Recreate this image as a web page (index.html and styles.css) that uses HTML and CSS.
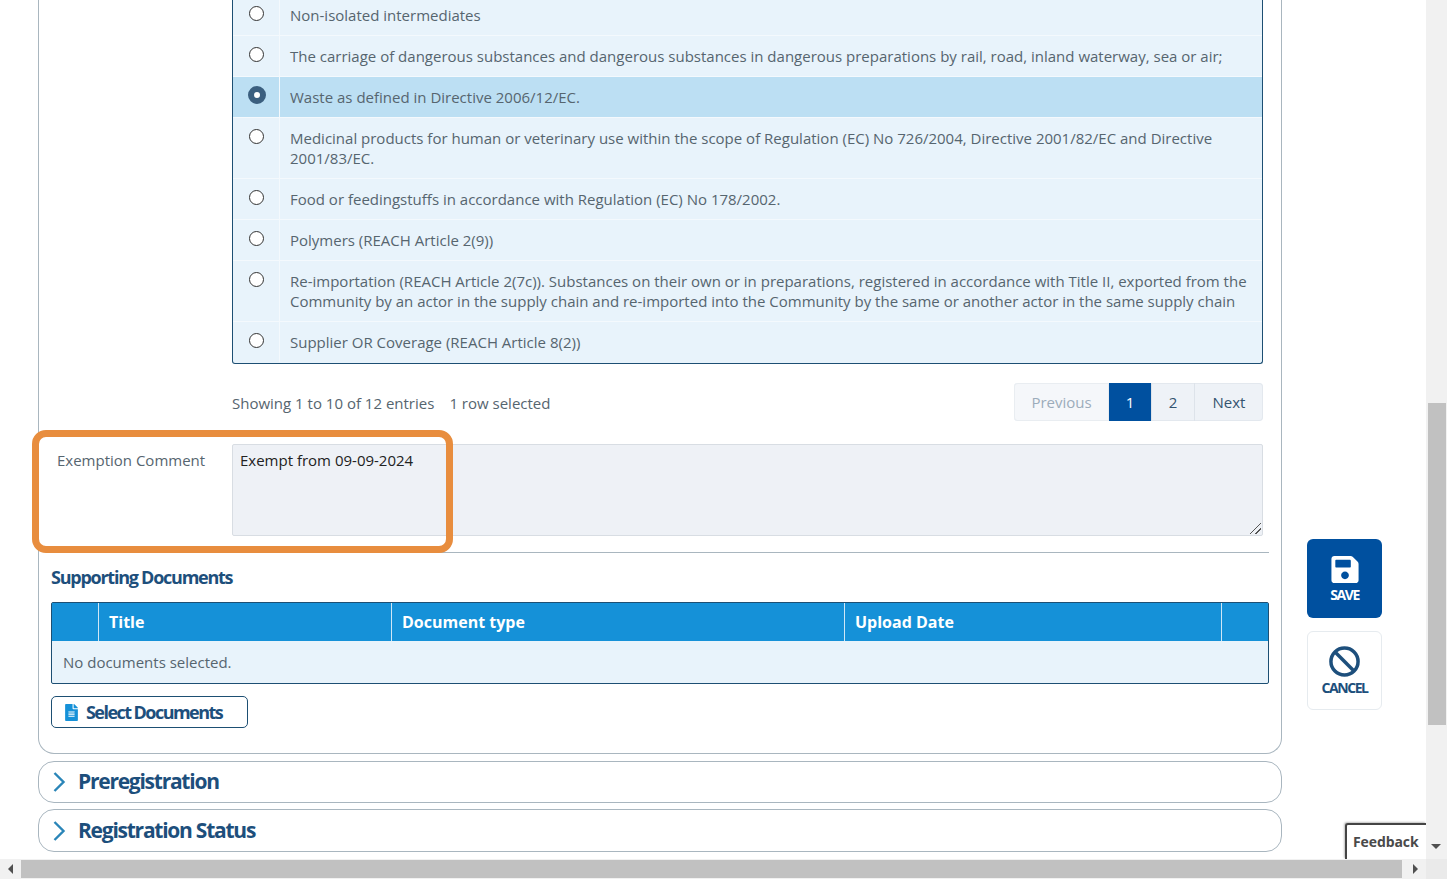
FILE: index.html
```html
<!DOCTYPE html>
<html lang="en">
<head>
<meta charset="utf-8">
<title>Exemption</title>
<link rel="stylesheet" href="styles.css">
</head>
<body>
<div class="window">
  <div class="page">
    <main class="scroller">
      <div class="scroll-content">
        <section class="panel panel-open">
          <div class="field">
            <div></div>
            <div>
              <div class="options">
                <label class="option"><span class="option-radio"><input type="radio" name="ex"></span><span class="option-text">Non-isolated intermediates</span></label>
                <label class="option"><span class="option-radio"><input type="radio" name="ex"></span><span class="option-text">The carriage of dangerous substances and dangerous substances in dangerous preparations by rail, road, inland waterway, sea or air;</span></label>
                <label class="option option-selected"><span class="option-radio"><input type="radio" name="ex" checked></span><span class="option-text">Waste as defined in Directive 2006/12/EC.</span></label>
                <label class="option"><span class="option-radio"><input type="radio" name="ex"></span><span class="option-text">Medicinal products for human or veterinary use within the scope of Regulation (EC) No 726/2004, Directive 2001/82/EC and Directive 2001/83/EC.</span></label>
                <label class="option"><span class="option-radio"><input type="radio" name="ex"></span><span class="option-text">Food or feedingstuffs in accordance with Regulation (EC) No 178/2002.</span></label>
                <label class="option"><span class="option-radio"><input type="radio" name="ex"></span><span class="option-text">Polymers (REACH Article 2(9))</span></label>
                <label class="option"><span class="option-radio"><input type="radio" name="ex"></span><span class="option-text">Re-importation (REACH Article 2(7c)). Substances on their own or in preparations, registered in accordance with Title II, exported from the Community by an actor in the supply chain and re-imported into the Community by the same or another actor in the same supply chain</span></label>
                <label class="option"><span class="option-radio"><input type="radio" name="ex"></span><span class="option-text">Supplier OR Coverage (REACH Article 8(2))</span></label>
              </div>
              <div class="table-footer">
                <div class="table-info"><span>Showing 1 to 10 of 12 entries</span><span>1 row selected</span></div>
                <nav class="pager">
                  <a class="pager-item pager-disabled">Previous</a>
                  <a class="pager-item pager-current">1</a>
                  <a class="pager-item">2</a>
                  <a class="pager-item">Next</a>
                </nav>
              </div>
            </div>
          </div>
          <div class="field field-comment">
            <label class="field-label" for="comment">Exemption Comment</label>
            <textarea id="comment" class="comment" readonly>Exempt from 09-09-2024</textarea>
          </div>
          <hr class="divider">
          <h3 class="docs-title">Supporting Documents</h3>
          <div class="docs-table">
            <div class="docs-head">
              <div class="docs-cell"></div>
              <div class="docs-cell">Title</div>
              <div class="docs-cell">Document type</div>
              <div class="docs-cell">Upload Date</div>
              <div class="docs-cell"></div>
            </div>
            <div class="docs-empty">No documents selected.</div>
          </div>
          <button class="select-btn" type="button">
            <svg class="select-icon" viewBox="0 0 384 512"><path d="M224 136V0H24C10.7 0 0 10.7 0 24v464c0 13.3 10.7 24 24 24h336c13.3 0 24-10.7 24-24V160H248c-13.2 0-24-10.8-24-24zm64 236c0 6.6-5.4 12-12 12H108c-6.6 0-12-5.4-12-12v-8c0-6.6 5.4-12 12-12h168c6.6 0 12 5.4 12 12v8zm0-64c0 6.6-5.4 12-12 12H108c-6.6 0-12-5.4-12-12v-8c0-6.6 5.4-12 12-12h168c6.6 0 12 5.4 12 12v8zm0-72v8c0 6.6-5.4 12-12 12H108c-6.6 0-12-5.4-12-12v-8c0-6.6 5.4-12 12-12h168c6.6 0 12 5.4 12 12zm96-114.1v6.1H256V0h6.1c6.4 0 12.5 2.5 17 7l97.9 98c4.5 4.5 7 10.6 7 16.9z"/></svg>
            <span>Select Documents</span>
          </button>
        </section>
        <section class="panel panel-closed">
          <svg class="chevron" viewBox="0 0 14 22"><path d="M2.5 2 L11.5 11 L2.5 20"/></svg>
          <h2 class="panel-title">Preregistration</h2>
        </section>
        <section class="panel panel-closed">
          <svg class="chevron" viewBox="0 0 14 22"><path d="M2.5 2 L11.5 11 L2.5 20"/></svg>
          <h2 class="panel-title">Registration Status</h2>
        </section>
      </div>
      <div class="annotation"></div>
      <div class="actions">
        <button class="action action-save" type="button">
          <svg class="action-icon" viewBox="0 0 448 512"><path d="M433.941 129.941l-83.882-83.882A48 48 0 0 0 316.118 32H48C21.49 32 0 53.49 0 80v352c0 26.51 21.49 48 48 48h352c26.51 0 48-21.49 48-48V163.882a48 48 0 0 0-14.059-33.941zM224 416c-35.346 0-64-28.654-64-64 0-35.346 28.654-64 64-64s64 28.654 64 64c0 35.346-28.654 64-64 64zm96-304.52V212c0 6.627-5.373 12-12 12H76c-6.627 0-12-5.373-12-12V108c0-6.627 5.373-12 12-12h228.52c3.183 0 6.235 1.264 8.485 3.515l3.48 3.48A11.996 11.996 0 0 1 320 111.48z"/></svg>
          <span>SAVE</span>
        </button>
        <button class="action action-cancel" type="button">
          <svg class="action-icon" viewBox="0 0 32 32"><circle cx="16" cy="16" r="14"/><path d="M6.5 6.5 L25.5 25.5"/></svg>
          <span>CANCEL</span>
        </button>
      </div>
      <div class="feedback">Feedback</div>
    </main>
    <div class="hscroll">
      <span class="arrow arrow-left"></span>
      <div class="hscroll-thumb"></div>
      <span class="arrow arrow-right"></span>
    </div>
  </div>
  <div class="vscroll">
    <div class="vscroll-thumb"></div>
    <div class="vscroll-corner"></div>
    <span class="arrow arrow-down"></span>
  </div>
</div>
</body>
</html>
```
FILE: styles.css
```css
* { box-sizing: border-box; }
html, body { margin: 0; height: 100%; overflow: hidden; }
body { font-family: "Open Sans", "Liberation Sans", sans-serif; font-size: 15px; line-height: 20px; color: #56656f; background: #fff; }

.window { display: flex; width: 1447px; height: 879px; }
.page { flex: 1; min-width: 0; display: flex; flex-direction: column; }
.scroller { position: relative; flex: 1; min-height: 0; overflow: hidden; }
.scroll-content { margin-top: -5px; padding-left: 38px; width: 1282px; display: flex; flex-direction: column; gap: 6px; }

.panel { border: 1px solid #a9b6bf; background: #fff; }
.panel-open { border-top: 0; border-radius: 0 0 16px 16px; padding: 0 12px 25px; margin-bottom: 1px; }
.panel-closed { display: flex; align-items: center; height: 42px; border-radius: 16px; padding-left: 13px; }
.panel-closed:last-child { height: 43px; }

.field { display: grid; grid-template-columns: 175px 1031px; padding: 0 6px; }
.options { border: 1px solid #1d4f73; border-top: 0; border-radius: 0 0 3px 3px; background: #e8f3fb; }
.option { display: flex; border-top: 1px solid #f4f9fd; }
.option:first-child { border-top: 0; }
.option:last-child { padding-bottom: 1px; }
.option-selected { background: #bcdff3; }
.option-radio { flex: 0 0 47px; border-right: 1px solid #f4f9fd; display: flex; justify-content: center; align-items: flex-start; padding-top: 11px; }
.option-radio input { appearance: none; margin: 0; width: 15px; height: 15px; border: 1.5px solid #333; border-radius: 50%; background: #fff; }
.option-radio input:checked { width: 18px; height: 18px; margin-top: -2px; margin-left: 2px; border: 6px solid #3b5f7f; }
.option-text { flex: 1; padding: 10px 11px 10px 10px; }

.table-footer { display: flex; justify-content: space-between; align-items: center; margin-top: 19px; height: 38px; }
.table-info { display: flex; gap: 15px; padding-top: 2px; }
.pager { display: flex; height: 38px; border-radius: 4px; background: #eef2f7; box-shadow: inset 0 0 0 1px #e3e8ee; }
.pager-item { display: flex; align-items: center; justify-content: center; width: 43px; border-left: 1px solid #dde3ea; color: #33546f; }
.pager-item:first-child { width: 95px; border-left: 0; }
.pager-item:last-child { width: 69px; }
.pager-disabled { color: #9cacbb; background: #f5f7fa; border-radius: 4px 0 0 4px; box-shadow: inset 0 0 0 1px #e9edf1; }
.pager-current { width: 42px; border-left: 0; color: #fff; background: #00509f; }

.field-comment { margin-top: 23px; }
.field-label { padding-top: 6px; padding-right: 10px; }
.comment { display: block; width: 1031px; height: 92px; margin: 0; padding: 5px 7px; border: 1px solid #d8dde3; border-radius: 2px; background: #eef1f6; color: #222; font: inherit; outline: 0; resize: both; }
.comment::-webkit-resizer { background: linear-gradient(135deg, transparent 46%, #555 46% 53%, transparent 53% 72%, #555 72% 79%, transparent 79%) no-repeat right 1px bottom 1px / 11px 11px; }

.divider { margin: 16px 0 0; border: 0; border-top: 1px solid #a9b6bf; }
.docs-title { margin: 12px 0 0; font-size: 18px; line-height: 24px; font-weight: 700; letter-spacing: -1.25px; color: #1d4f7c; }

.docs-table { margin-top: 13px; border: 1px solid #1d4f73; border-radius: 2px; background: #e8f3fb; }
.docs-head { display: grid; grid-template-columns: 46px 293px 453px 377px 1fr; height: 38px; background: #1591d8; color: #fff; font-size: 16px; font-weight: 700; line-height: 38px; }
.docs-cell { border-left: 1px solid #cfe7f6; padding-left: 10px; }
.docs-cell:first-child { border-left: 0; }
.docs-empty { height: 42px; padding: 11px; }

.select-btn { display: flex; align-items: center; gap: 8px; width: 197px; height: 32px; margin-top: 12px; padding: 0 0 0 13px; border: 1px solid #1d4f73; border-radius: 5px; background: #fff; font: 700 18px "Open Sans", sans-serif; letter-spacing: -1.55px; color: #1d4f7c; }
.select-icon { width: 13px; height: 17px; fill: #1591d8; }

.chevron { width: 14px; height: 22px; fill: none; stroke: #2a85b8; stroke-width: 2.4; }
.panel-title { margin: 0 0 0 12px; padding-bottom: 2px; font-size: 21px; line-height: 30px; font-weight: 700; letter-spacing: -1.25px; color: #1d4f7c; }

.annotation { position: absolute; left: 32px; top: 430px; width: 421px; height: 123px; border: 7px solid #e88d3e; border-radius: 14px; }

.actions { position: absolute; left: 1307px; top: 539px; display: flex; flex-direction: column; gap: 13px; width: 75px; }
.action { display: flex; flex-direction: column; align-items: center; height: 79px; padding: 15px 0 0; border-radius: 6px; font: 700 14px/18px "Open Sans", sans-serif; letter-spacing: -1.4px; }
.action-icon { width: 28px; height: 31px; }
.action-save { border: 0; background: #00509f; color: #fff; }
.action-save .action-icon { fill: #fff; }
.action-save span { margin-top: 1px; }
.action-cancel { border: 1px solid #e6ebef; background: #fff; color: #1d4f7c; padding-top: 14px; }
.action-cancel .action-icon { width: 31px; height: 31px; fill: none; stroke: #1d4f7c; stroke-width: 3.6; }
.action-cancel span { margin-top: 2px; }

.feedback { position: absolute; right: 0; bottom: 0; width: 81px; height: 36px; padding: 6px 0 0 6px; border-left: 2px solid #444; border-top: 2px solid #444; border-radius: 3px 0 0 0; background: #fff; color: #4a4a4a; font-size: 14px; font-weight: 700; line-height: 22px; letter-spacing: -0.1px; box-shadow: -1px -1px 2px rgba(0,0,0,.25); }

.hscroll { display: flex; align-items: center; height: 20px; background: #f1f1f1; }
.hscroll-thumb { width: 1381px; height: 18px; margin-left: 21px; background: #c1c1c1; }
.vscroll { position: relative; flex: 0 0 21px; background: #f1f1f1; }
.vscroll-thumb { position: absolute; left: 2px; right: 1px; top: 403px; height: 322px; background: #c1c1c1; }
.vscroll-corner { position: absolute; left: 0; right: 0; bottom: 0; height: 20px; background: #eaeaea; }
.arrow { position: absolute; width: 0; height: 0; border: 5px solid transparent; }
.arrow-left { left: 8px; bottom: 5px; border-left: 0; border-right-color: #505050; }
.arrow-right { left: 1413px; bottom: 5px; border-right: 0; border-left-color: #505050; }
.arrow-down { left: 5px; top: 844px; border-bottom: 0; border-top-color: #505050; }
```
